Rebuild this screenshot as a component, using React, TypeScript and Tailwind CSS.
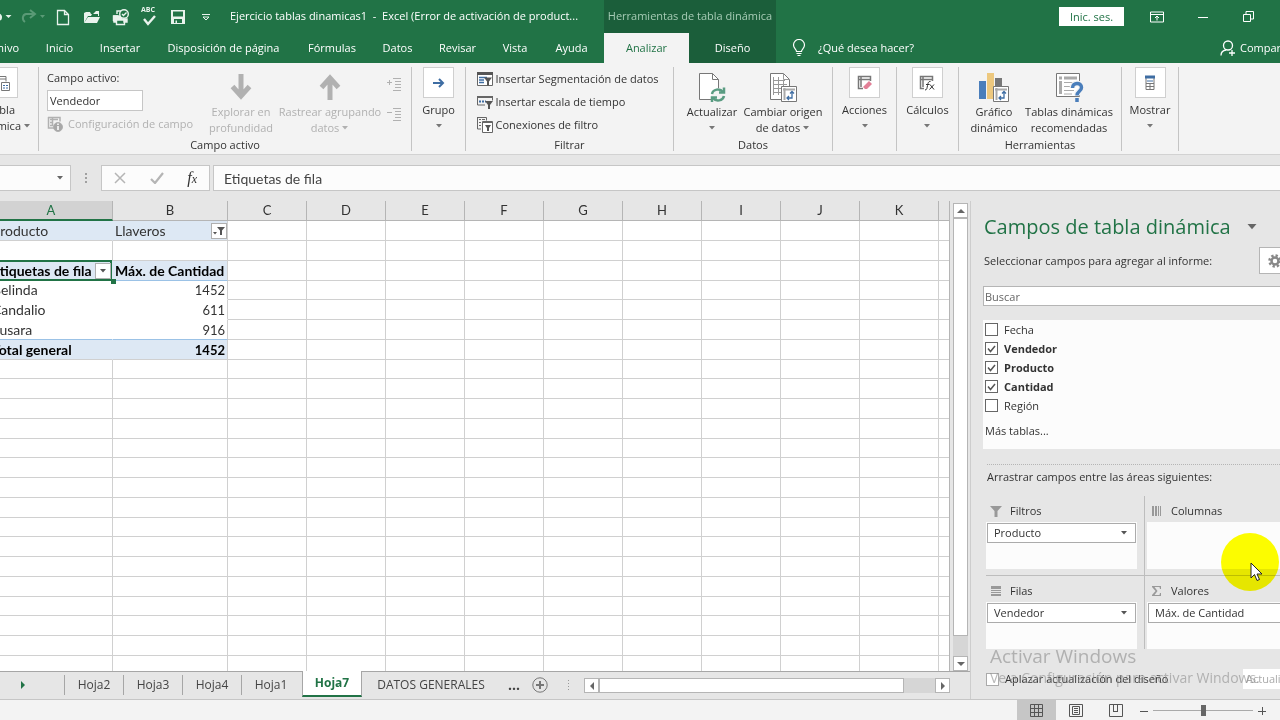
import type { ReactNode } from "react";
import clsx from "clsx";

const menuTabs = [
  { name: "Inicio", width: "w-[55px]" },
  { name: "Insertar", width: "w-[66px]" },
  { name: "Disposición de página", width: "w-[141px]" },
  { name: "Fórmulas", width: "w-[76px]" },
  { name: "Datos", width: "w-[55px]" },
  { name: "Revisar", width: "w-[65px]" },
  { name: "Vista", width: "w-[50px]" },
  { name: "Ayuda", width: "w-[63px]" },
];

const columns = ["C", "D", "E", "F", "G", "H", "I", "J", "K"];

const pivotRows = [
  { label: "Producto", value: "Llaveros", kind: "filter" },
  { label: "", value: "", kind: "empty" },
  { label: "Etiquetas de fila", value: "Máx. de Cantidad", kind: "head" },
  { label: "Belinda", value: "1452", kind: "data" },
  { label: "Candalio", value: "611", kind: "data" },
  { label: "Susara", value: "916", kind: "data" },
  { label: "Total general", value: "1452", kind: "total" },
];

const rowCount = 22;

const fields = [
  { name: "Fecha", checked: false },
  { name: "Vendedor", checked: true },
  { name: "Producto", checked: true },
  { name: "Cantidad", checked: true },
  { name: "Región", checked: false },
];

const sheets = ["Hoja2", "Hoja3", "Hoja4", "Hoja1"];

function Caret({ className }: { className?: string }) {
  return (
    <svg viewBox="0 0 8 4" className={clsx("inline-block h-1 w-2 shrink-0 fill-current", className)}>
      <path d="M1 0h6L4 3.5z" />
    </svg>
  );
}

/* ---------- Title bar ---------- */

function QuickAccess() {
  return (
    <div className="flex w-[216px] shrink-0 items-center text-[#e9f3ed]">
      <svg viewBox="0 0 50 20" className="h-5 w-[50px] shrink-0" fill="none" stroke="currentColor">
        <path d="M-3 7c4 0 5 3 3 6" strokeWidth="2" />
        <path d="M5.5 8h6l-3 3z" fill="currentColor" stroke="none" />
        <g stroke="#5a9a76">
          <path d="M34 7h-8c-4 1-4 6-1 8" strokeWidth="2" />
          <path d="M30 3l5 4-5 4" strokeWidth="2" />
          <path d="M40 8h5l-2.500 3z" fill="#5a9a76" stroke="none" />
        </g>
      </svg>
      <button aria-label="Nuevo" className="ml-1 w-[29px]">
        <svg viewBox="0 0 18 18" className="h-[18px] w-[18px]" fill="none" stroke="currentColor" strokeWidth="1.3">
          <path d="M3.500 2.500h7l4 4v10h-11zM10.500 2.500v4h4" />
        </svg>
      </button>
      <button aria-label="Abrir" className="w-[29px]">
        <svg viewBox="0 0 18 18" className="h-[18px] w-[18px]" fill="currentColor">
          <path d="M1 15V5l2-1h4l1 2h2l3-3h3v5h-1V6H9L8 8H5z" />
          <path d="M5 9h12l-3 6H1z" />
        </svg>
      </button>
      <button aria-label="Vista previa" className="w-[29px]">
        <svg viewBox="0 0 18 18" className="h-[18px] w-[18px]" fill="none" stroke="currentColor" strokeWidth="1.400">
          <path d="M1.500 13V8H6M1.500 13h3M5 6V3h4" />
          <path d="M2 8h5l3 3h5v3h-3v-2H4v2H2z" fill="currentColor" />
          <path d="M4.500 12v4.500h8V12" />
          <circle cx="12" cy="6" r="4.300" fill="#217346" />
          <path d="M10 6l1.500 1.500L14.500 4.500" />
        </svg>
      </button>
      <button aria-label="Ortografía" className="relative h-[18px] w-[28px] text-left">
        <span className="absolute -top-0.5 left-0 text-[7px] leading-2 font-bold">ABC</span>
        <svg viewBox="0 0 18 18" className="h-[18px] w-[18px]" fill="none" stroke="currentColor" strokeWidth="2.400">
          <path d="M3 11l4 5 7-8" />
        </svg>
      </button>
      <button aria-label="Guardar" className="w-[28px]">
        <svg viewBox="0 0 18 18" className="h-[18px] w-[18px]">
          <path d="M2 2h14v14H2z" fill="currentColor" />
          <path d="M4 3.500h10v5H4zM5 11h8v4H8v-2.500H6.500V15H5z" fill="#217346" />
        </svg>
      </button>
      <button aria-label="Personalizar" className="ml-1">
        <svg viewBox="0 0 10 10" className="h-[10px] w-[10px]" fill="none" stroke="currentColor">
          <path d="M1 2.500h8M2 5l3 3 3-3z" />
        </svg>
      </button>
    </div>
  );
}

function TitleBar() {
  return (
    <header className="flex h-[33px] shrink-0 items-center bg-[#217346] text-[11px] whitespace-nowrap text-white">
      <QuickAccess />
      <h1 className="ml-3.5 w-[374px] shrink-0">
        Ejercicio tablas dinamicas1&nbsp; -&nbsp; Excel (Error de activación de product...
      </h1>
      <div className="w-[172px] shrink-0 self-stretch bg-[#1b5e3a] text-center leading-[32px] text-[#a6cbb5]">
        Herramientas de tabla dinámica
      </div>
      <div className="flex flex-1 items-center justify-end">
        <button className="h-[19px] w-[65px] bg-white leading-4 text-[#217346]">Inic. ses.</button>
        <button aria-label="Opciones de presentación" className="ml-[26px]">
          <svg viewBox="0 0 14 12" className="h-3 w-[14px]" fill="none" stroke="currentColor">
            <path d="M.5 1h13v10H.5zM.5 3.500h13M7 9.500V5M5 7l2-2 2 2" />
          </svg>
        </button>
        <button aria-label="Minimizar" className="ml-[34px]">
          <svg viewBox="0 0 10 10" className="h-[10px] w-[10px]" stroke="currentColor">
            <path d="M0 5.500h10" />
          </svg>
        </button>
        <button aria-label="Restaurar" className="mr-[26px] ml-[35px]">
          <svg viewBox="0 0 11 11" className="h-[11px] w-[11px]" fill="none" stroke="currentColor">
            <path d="M.5 3.500h7v7h-7zM3 3V.5h7.500V8H8" />
          </svg>
        </button>
      </div>
    </header>
  );
}

function MenuTabs() {
  return (
    <nav className="flex h-[30px] shrink-0 items-center overflow-hidden bg-[#217346] text-[11px] font-medium text-white">
      <button className="flex w-8 shrink-0 justify-end pr-[13px]">Archivo</button>
      {menuTabs.map((tab) => (
        <button key={tab.name} className={clsx("shrink-0 text-center whitespace-nowrap", tab.width)}>
          {tab.name}
        </button>
      ))}
      <button className="ml-px w-[85px] shrink-0 self-stretch bg-[#f3f3f3] text-[#217346]">Analizar</button>
      <button className="w-[87px] shrink-0 self-stretch bg-[#1b5e3a]">Diseño</button>
      <button className="ml-4 flex items-center gap-3 whitespace-nowrap">
        <svg viewBox="0 0 14 18" className="h-[18px] w-[14px]" fill="none" stroke="currentColor" strokeWidth="1.200">
          <path d="M4.500 12.500c0-2-3-3-3-6.500a5.500 5.500 0 0 1 11 0c0 3.500-3 4.500-3 6.500zM4.500 14.500h5M5.500 16.500h3" />
        </svg>
        ¿Qué desea hacer?
      </button>
      <button className="ml-auto flex w-[60px] shrink-0 items-center gap-1 whitespace-nowrap">
        <svg viewBox="0 0 16 16" className="h-4 w-4 shrink-0" fill="none" stroke="currentColor" strokeWidth="1.300">
          <circle cx="8" cy="5.500" r="4.500" />
          <path d="M1 15.500c0-3 2-5 5-5.500M9 13h6M12 10v6" />
        </svg>
        Compartir
      </button>
    </nav>
  );
}

/* ---------- Ribbon ---------- */

function Group({ width, label, children }: { width: string; label?: string; children: ReactNode }) {
  return (
    <section className={clsx("flex h-[84px] shrink-0 flex-col border-r border-[#c4c4c4]", width)}>
      <div className="flex flex-1 justify-center">{children}</div>
      {label && <h2 className="h-3 text-center leading-3">{label}</h2>}
    </section>
  );
}

function BoxButton({ label, children }: { label: string; children: ReactNode }) {
  return (
    <button className="flex flex-col items-center whitespace-nowrap">
      <span className="mb-1 flex h-[31px] w-[31px] items-center justify-center border border-[#cfcfcf] bg-white">
        {children}
      </span>
      {label}
      <Caret className="mt-1.5 text-[#777]" />
    </button>
  );
}

function BigButton({
  lines,
  caret,
  width,
  muted,
  children,
}: {
  lines: string[];
  caret?: boolean;
  width: string;
  muted?: boolean;
  children: ReactNode;
}) {
  return (
    <button
      className={clsx("flex shrink-0 flex-col items-center whitespace-nowrap", width, muted && "text-[#b1b1b1]")}
    >
      <span className="mt-1 mb-px flex h-8 items-center">{children}</span>
      {lines.map((line, i) => (
        <span key={line} className="flex items-center gap-0.5">
          {line}
          {caret && i === 1 && <Caret className={muted ? "" : "text-[#777]"} />}
        </span>
      ))}
      {caret && lines.length === 1 && <Caret className="mt-1.5 text-[#777]" />}
    </button>
  );
}

function FilterRow({ label, children }: { label: string; children: ReactNode }) {
  return (
    <button className="flex h-[23px] items-center gap-[3px] whitespace-nowrap">
      <svg viewBox="0 0 16 16" className="h-4 w-4 shrink-0" fill="none" stroke="#666">
        {children}
      </svg>
      {label}
    </button>
  );
}

function Arrow({ up }: { up?: boolean }) {
  return (
    <svg
      viewBox="0 0 22 26"
      className={clsx("h-[26px] w-[22px]", up && "rotate-180")}
      fill="none"
      stroke="#b1b1b1"
      strokeWidth="5"
    >
      <path d="M11 0v22M2.500 12.500L11 22l8.500-9.500" />
    </svg>
  );
}

function IndentIcon({ plus }: { plus?: boolean }) {
  return (
    <svg viewBox="0 0 14 14" className="h-[14px] w-[14px]" fill="none" stroke="#b1b1b1">
      <path d="M6 1.500h8M8 4.500h6M8 7.500h6M8 10.500h6M6 13.500h8M0 5.500h5" />
      {plus && <path d="M2.500 3v5" />}
    </svg>
  );
}

function Ribbon() {
  return (
    <div className="flex h-[92px] shrink-0 overflow-hidden border-b border-[#d2d2d2] bg-[#f3f3f3] pt-1 text-[11px] leading-4 text-[#333]">
      <Group width="w-[39px]">
        <button className="flex w-full flex-col items-start overflow-hidden">
          <span className="mb-1 flex h-[31px] w-[18px] items-center border border-l-0 border-[#cfcfcf] bg-white">
            <svg viewBox="0 0 10 18" className="h-[18px] w-[10px]" fill="none" stroke="#777">
              <path d="M-2 2.500h8v5M-2 5h8" />
              <path d="M1.500 8.500h8v8h-8z" fill="#fff" />
              <path d="M3 11.500h2M6 11.500h2M3 14h2M6 14h2" stroke="#3e6da3" />
            </svg>
          </span>
          <span className="flex w-[15px] justify-end">Tabla</span>
          <span className="flex w-[31px] items-center justify-end gap-0.5 whitespace-nowrap">
            dinámica <Caret className="text-[#777]" />
          </span>
        </button>
      </Group>

      <Group width="w-[373px]" label="Campo activo">
        <div className="flex flex-1 pl-2">
          <div className="flex w-[160px] shrink-0 flex-col">
            <label htmlFor="campo" className="mt-[3px]">
              Campo activo:
            </label>
            <input
              id="campo"
              defaultValue="Vendedor"
              className="mt-1 h-[21px] w-24 border border-[#c6c6c6] bg-white px-0.5"
            />
            <button className="mt-[3px] flex items-center gap-[5px] leading-5 whitespace-nowrap text-[#b1b1b1]">
              <svg viewBox="0 0 16 16" className="h-4 w-4 shrink-0" fill="none" stroke="#b1b1b1">
                <path d="M1 1.500h12v4M1.500 1v11H7M3 3.500h8M3 6.500h3M3 9.500h3M5.500 1v9" strokeWidth="1.500" />
                <circle cx="11" cy="11" r="4.500" fill="#a8a8a8" />
                <path d="M11 7.500V9M11 10v4" stroke="#fff" strokeWidth="1.500" />
              </svg>
              Configuración de campo
            </button>
          </div>
          <BigButton lines={["Explorar en", "profundidad"]} width="w-[68px]" muted>
            <Arrow />
          </BigButton>
          <BigButton lines={["Rastrear agrupando", "datos"]} width="w-[110px]" caret muted>
            <Arrow up />
          </BigButton>
          <div className="ml-0.5 flex flex-col gap-4 pt-2.5">
            <IndentIcon plus />
            <IndentIcon />
          </div>
        </div>
      </Group>

      <Group width="w-[54px]">
        <BoxButton label="Grupo">
          <svg viewBox="0 0 12 12" className="h-3 w-3" fill="none" stroke="#3e6da3" strokeWidth="2">
            <path d="M0 6h10M6 2l4 4-4 4" />
          </svg>
        </BoxButton>
      </Group>

      <Group width="w-[208px]" label="Filtrar">
        <div className="flex w-[186px] flex-col">
          <FilterRow label="Insertar Segmentación de datos">
            <path d="M.5 1.500h15v13H.5z" fill="#fff" />
            <path d="M0 2.500h16" stroke="#555" strokeWidth="3" />
            <path d="M2 6.500h8M2 9h5M2 11.500h5" stroke="#3e6da3" strokeWidth="1.500" />
            <path d="M7 6.500h8l-3 4v4h-2v-4z" fill="#555" stroke="none" />
          </FilterRow>
          <FilterRow label="Insertar escala de tiempo">
            <path d="M.5 2.500h15v4M.5 2v9H8" />
            <path d="M0 3h16" strokeWidth="2" />
            <path d="M2 7.500h2M5 7.500h2M8 7.500h1" stroke="#3e6da3" strokeWidth="2" />
            <path d="M8 7h8l-3 4v4h-2v-4z" fill="#555" stroke="none" />
          </FilterRow>
          <FilterRow label="Conexiones de filtro">
            <path d="M.5 .5h9v3M.5 0v12H4M2 2.500h2M2 5.500h2M2 8.500h2M5 2.500h3" />
            <path d="M5.500 4.500h10v11h-10zM5 5.500h11" fill="#fff" />
            <path d="M8 8h6l-2 3v3h-2v-3z" fill="#555" stroke="none" />
          </FilterRow>
        </div>
      </Group>

      <Group width="w-[159px]" label="Datos">
        <BigButton lines={["Actualizar"]} width="w-[60px]" caret>
          <svg viewBox="0 0 28 30" className="h-[30px] w-7" fill="none" stroke="#777">
            <path d="M1.500 1.500h13l6 6v20h-19z" fill="#fff" />
            <path d="M14.500 1.500v6h6" />
            <circle cx="20" cy="23" r="7" fill="#f3f3f3" stroke="none" />
            <g stroke="#5a9c82" strokeWidth="2.500">
              <path d="M14 22c1-5 8-6 11-2M26 24c-1 5-8 6-11 2" />
              <path d="M26 15.500v5h-5M14 30v-4.500h5" />
            </g>
          </svg>
        </BigButton>
        <BigButton lines={["Cambiar origen", "de datos"]} width="w-[82px]" caret>
          <svg viewBox="0 0 28 30" className="h-[30px] w-7" fill="none" stroke="#777">
            <path d="M1.500 1.500h13l6 6v20h-19z" fill="#fff" />
            <path d="M14.500 1.500v6h6M4 8.500h12M4 12.500h14M4 16.500h10M4 20.500h8M4.500 5v18M9.500 5v18M14.500 9v6" stroke="#999" />
            <path d="M12.500 14.500h15v15h-15z" fill="#fff" />
            <path d="M14 17.500h12M15.500 16v12" stroke="#aaa" strokeWidth="2" />
            <path d="M18 26h5v-6M21 21.500l2-2 2 2M20 24l-2 2 2 2" stroke="#3e6da3" strokeWidth="1.300" />
          </svg>
        </BigButton>
      </Group>

      <Group width="w-[64px]">
        <BoxButton label="Acciones">
          <svg viewBox="0 0 16 16" className="h-4 w-4" fill="none" stroke="#777">
            <path d="M6 13.500H1.500v-12h12V6M4 1v11M1 4.500h12" strokeWidth="1.500" />
            <path d="M6 12l6-6 3 3-5 5H8z" fill="#e28097" stroke="none" />
          </svg>
        </BoxButton>
      </Group>

      <Group width="w-[62px]">
        <BoxButton label="Cálculos">
          <svg viewBox="0 0 16 16" className="h-4 w-4" fill="none" stroke="#777">
            <path d="M5 13.500H1.500v-12h12V6M4 1v11M1 4.500h12" strokeWidth="1.500" />
            <path d="M6 15c2 0 2-2 2.500-4.500S9.500 6 11.500 6.500M7 9.500h3.500M11 9.500l4 5M15 9.500l-4.500 5" stroke="#333" />
          </svg>
        </BoxButton>
      </Group>

      <Group width="w-[163px]" label="Herramientas">
        <BigButton lines={["Gráfico", "dinámico"]} width="w-[58px]">
          <svg viewBox="0 0 32 30" className="h-[30px] w-8" fill="none">
            <path d="M1 9h7v18H1z" fill="#4a7ebb" />
            <path d="M9 1h7v26H9z" fill="#edc87e" />
            <path d="M17 6h7v8h-7z" fill="#777" />
            <path d="M15.500 14.500h15v15h-15z" fill="#fff" stroke="#777" />
            <path d="M17 17.500h12M18.500 16v12" stroke="#aaa" strokeWidth="2" />
            <path d="M21 26h5v-6M24 21.500l2-2 2 2M23 24l-2 2 2 2" stroke="#3e6da3" strokeWidth="1.300" />
          </svg>
        </BigButton>
        <BigButton lines={["Tablas dinámicas", "recomendadas"]} width="w-[92px]">
          <svg viewBox="0 0 30 30" className="h-[30px] w-[30px]" fill="none">
            <path d="M2.500 1.500h23v23h-23z" fill="#fff" stroke="#777" />
            <path d="M5 6h3M10 6h13M6.500 9v13" stroke="#aaa" strokeWidth="3" />
            <path d="M10 10.500h13M10 14.500h12M10 18.500h10M10 22h8" stroke="#aaa" />
            <path
              d="M18.500 16c0-6 9-6 9-.5 0 4-4.500 3.500-4.500 8M23 26v4"
              stroke="#f3f3f3"
              strokeWidth="6"
            />
            <path
              d="M18.500 16c0-6 9-6 9-.5 0 4-4.500 3.500-4.500 8M23 26v4"
              stroke="#4a7ebb"
              strokeWidth="3.500"
            />
          </svg>
        </BigButton>
      </Group>

      <Group width="w-[57px]">
        <BoxButton label="Mostrar">
          <svg viewBox="0 0 10 16" className="h-4 w-[10px]" fill="none" stroke="#777">
            <path d="M1 1.500h8v13H1zM1 8.500h8M1 11.500h8M5 8v6" />
            <path d="M0 2h10" stroke="#3e6da3" strokeWidth="3" />
            <path d="M2 6h6" stroke="#3e6da3" />
          </svg>
        </BoxButton>
      </Group>
    </div>
  );
}

/* ---------- Formula bar and grid ---------- */

function FormulaBar() {
  return (
    <div className="flex h-[46px] shrink-0 items-start pt-[10px] text-[#666]">
      <div className="flex h-[26px] w-[71px] shrink-0 items-center border border-l-0 border-[#c6c6c6] bg-[#fcfcfc]">
        <input aria-label="Cuadro de nombres" className="w-0 flex-1" />
        <Caret className="mr-1.5" />
      </div>
      <span className="mx-3.5 grid h-[26px] w-0.5 content-center gap-0.5">
        <i className="h-0.5 bg-[#a0a0a0]" />
        <i className="h-0.5 bg-[#a0a0a0]" />
        <i className="h-0.5 bg-[#a0a0a0]" />
      </span>
      <div className="flex h-[26px] w-[109px] shrink-0 items-center justify-between border border-[#c6c6c6] bg-[#fcfcfc] px-3">
        <svg viewBox="0 0 12 12" className="h-3 w-3" stroke="#b5b5b5" strokeWidth="1.500">
          <path d="M1 1l10 10M11 1L1 11" />
        </svg>
        <svg viewBox="0 0 14 12" className="h-3 w-[14px]" fill="none" stroke="#b5b5b5" strokeWidth="2.200">
          <path d="M1 7l4 4 8-10" />
        </svg>
        <button className="font-['Liberation_Serif',serif] text-[16px] leading-5 text-[#333] italic">
          f<span className="text-[12px]">x</span>
        </button>
      </div>
      <input
        aria-label="Barra de fórmulas"
        defaultValue="Etiquetas de fila"
        className="ml-[3px] h-[26px] min-w-0 flex-1 border border-r-0 border-[#c6c6c6] bg-[#fcfcfc] px-[10px] font-['Lato',sans-serif] text-[14px] text-[#444]"
      />
    </div>
  );
}

function Grid() {
  return (
    <table className="w-full table-fixed border-separate border-spacing-0 font-['Lato',sans-serif] text-[14px] leading-4 text-[#333]">
      <colgroup>
        <col className="w-[113px]" />
        <col className="w-[115px]" />
        {columns.map((name) => (
          <col key={name} className="w-[79px]" />
        ))}
        <col />
      </colgroup>
      <thead className="text-[13px]">
        <tr className="h-5">
          <th className="border-r border-b-2 border-r-[#b5b5b5] border-b-[#217346] bg-[#d2d2d2] p-0 pr-2.5 font-normal text-[#217346]">
            A
          </th>
          {["B", ...columns].map((name) => (
            <th key={name} className="border-r border-b border-[#b5b5b5] bg-[#e6e6e6] p-0 pb-0.5 font-normal">
              {name}
            </th>
          ))}
          <th className="border-b border-[#b5b5b5] bg-[#e6e6e6]" />
        </tr>
      </thead>
      <tbody>
        {Array.from({ length: rowCount }, (_, i) => {
          const row = pivotRows[i];
          const kind = row?.kind;
          const blue = kind === "filter" || kind === "head" || kind === "total";
          const bold = kind === "head" || kind === "total";
          return (
            <tr key={i} className={i % 4 === 3 ? "h-[19px]" : "h-5"}>
              <td
                className={clsx(
                  "relative border-r border-b p-0 whitespace-nowrap",
                  blue ? "bg-[#dde8f4]" : "bg-white",
                  kind === "data" || blue ? "border-r-transparent" : "border-r-[#d0d0d0]",
                  kind === "head" || i === 5
                    ? "border-b-[#9bc2e6]"
                    : kind === "data"
                      ? "border-b-white"
                      : "border-b-[#d0d0d0]",
                  bold && "font-bold text-black",
                )}
              >
                {/* labels run out past the left edge of the window */}
                <span className="-ml-2 block">{row?.label}</span>
                {kind === "head" && (
                  <>
                    <span className="absolute -top-px right-0 -bottom-px -left-1 border-2 border-[#217346]" />
                    <span className="absolute -right-1 -bottom-1 z-10 h-[5px] w-[5px] bg-[#217346]" />
                    <button
                      aria-label="Filtrar etiquetas"
                      className="absolute top-0.5 right-px flex h-4 w-4 items-center justify-center border border-[#b0b0b0] bg-white text-[#555]"
                    >
                      <Caret />
                    </button>
                  </>
                )}
              </td>
              <td
                className={clsx(
                  "relative border-r border-b border-r-[#d0d0d0] px-0.5 py-0 whitespace-nowrap",
                  blue ? "bg-[#dde8f4]" : "bg-white",
                  kind === "head" || i === 5
                    ? "border-b-[#9bc2e6]"
                    : kind === "data"
                      ? "border-b-white"
                      : "border-b-[#d0d0d0]",
                  bold && "font-bold text-black",
                  (kind === "data" || kind === "total") && "text-right text-[13px]",
                )}
              >
                {row?.value}
                {kind === "filter" && (
                  <button
                    aria-label="Filtrar producto"
                    className="absolute top-0.5 right-0 flex h-4 w-4 items-center justify-center border border-[#b0b0b0] bg-white"
                  >
                    <svg viewBox="0 0 12 10" className="h-[10px] w-3" fill="#555">
                      <path d="M4 1h8L9 4.500V9H7V4.500zM0 6h4L2 8.500z" />
                    </svg>
                  </button>
                )}
              </td>
              {columns.map((name) => (
                <td key={name} className="border-r border-b border-[#d0d0d0] bg-white p-0" />
              ))}
              <td className="border-b border-[#d0d0d0] bg-white p-0" />
            </tr>
          );
        })}
        <tr className="h-[15px]">
          {["A", "B", ...columns].map((name) => (
            <td key={name} className="border-r border-[#d0d0d0] bg-white p-0" />
          ))}
          <td className="bg-white p-0" />
        </tr>
      </tbody>
    </table>
  );
}

function ScrollButton({ label, path }: { label: string; path: string }) {
  return (
    <button
      aria-label={label}
      className="flex h-[15px] w-[15px] shrink-0 items-center justify-center border border-[#b5b5b5] bg-white"
    >
      <svg viewBox="0 0 8 8" className="h-2 w-2" fill="#666">
        <path d={path} />
      </svg>
    </button>
  );
}

function SheetTabs() {
  return (
    <div className="flex h-7 shrink-0 items-start border-t border-[#a6a6a6] pr-5 text-[12px] text-[#444]">
      <button aria-label="Siguiente hoja" className="ml-5 flex h-[26px] w-[44px] shrink-0 items-center">
        <svg viewBox="0 0 8 8" className="h-2 w-2" fill="#217346">
          <path d="M1 0l4 4-4 4z" />
        </svg>
      </button>
      {sheets.map((name) => (
        <button key={name} className="mt-[3px] h-5 w-[59px] shrink-0 border-l border-[#a6a6a6] leading-5">
          {name}
        </button>
      ))}
      <button className="-mt-px ml-0.5 h-[26px] w-[60px] shrink-0 border-x border-b-2 border-x-[#a6a6a6] border-b-[#217346] bg-white font-bold text-[#217346]">
        Hoja7
      </button>
      <button className="h-[26px] w-[138px] shrink-0 whitespace-nowrap">DATOS GENERALES</button>
      <span className="ml-2 w-5 shrink-0 text-[14px] leading-[26px] font-bold">...</span>
      <button aria-label="Hoja nueva" className="mt-[5px] ml-1">
        <svg viewBox="0 0 16 16" className="h-4 w-4" fill="none" stroke="#777">
          <circle cx="8" cy="8" r="7.200" />
          <path d="M8 4v8M4 8h8" strokeWidth="2" />
        </svg>
      </button>
      <span className="mt-2 ml-5 grid w-px shrink-0 gap-0.5">
        <i className="h-px bg-[#999]" />
        <i className="h-px bg-[#999]" />
        <i className="h-px bg-[#999]" />
        <i className="h-px bg-[#999]" />
      </span>
      <div className="mt-1.5 ml-[15px] flex min-w-0 flex-1 bg-[#d6d6d6]">
        <ScrollButton label="Izquierda" path="M6 0v8L2 4z" />
        <div className="mr-[31px] h-[15px] flex-1 border border-[#b5b5b5] bg-white" />
        <ScrollButton label="Derecha" path="M2 0v8l4-4z" />
      </div>
    </div>
  );
}

/* ---------- Field list ---------- */

function CheckBox({ name, checked }: { name: string; checked: boolean }) {
  return (
    <label className={clsx("flex h-[19px] items-center gap-1.5", checked && "font-bold")}>
      <span className="relative h-[13px] w-[13px]">
        <input
          type="checkbox"
          defaultChecked={checked}
          className="peer block h-[13px] w-[13px] appearance-none border border-[#666] bg-white"
        />
        <svg
          viewBox="0 0 13 13"
          className="pointer-events-none absolute inset-0 hidden peer-checked:block"
          fill="none"
          stroke="#555"
          strokeWidth="1.500"
        >
          <path d="M3 6.500l2.500 3L10 4" />
        </svg>
      </span>
      {name}
    </label>
  );
}

function Area({ title, field, icon }: { title: string; field?: string; icon: ReactNode }) {
  return (
    <div className="pt-[7px]">
      <h3 className="flex h-4 items-center gap-2 pl-1">
        <svg viewBox="0 0 12 12" className="h-3 w-3 shrink-0" fill="#999">
          {icon}
        </svg>
        {title}
      </h3>
      <div className="mt-[3px] h-[47px] bg-[#fcfcfc] p-px">
        {field && (
          <button className="flex h-5 w-full items-center justify-between border border-[#ababab] bg-white px-1.5 whitespace-nowrap">
            {field}
            <Caret className="mr-px text-[#555]" />
          </button>
        )}
      </div>
    </div>
  );
}

function FieldPane() {
  return (
    <aside className="relative flex w-[310px] shrink-0 flex-col overflow-hidden border-l border-[#cdcdcd] pl-3 text-[11px] leading-4 text-[#333]">
      <div className="mt-3 flex h-7 shrink-0 items-center">
        <h2 className="w-[263px] shrink-0 pl-px text-[20px] whitespace-nowrap text-[#217346]">
          Campos de tabla dinámica
        </h2>
        <Caret className="h-1.5 w-3 text-[#666]" />
      </div>
      <div className="mt-1.5 flex h-[27px] shrink-0 items-center justify-between">
        <p className="pl-px whitespace-nowrap">Seleccionar campos para agregar al informe:</p>
        <button
          aria-label="Herramientas"
          className="flex h-[27px] w-[21px] shrink-0 items-center overflow-hidden border border-r-0 border-[#b5b5b5] bg-white pl-2"
        >
          <svg viewBox="0 0 14 14" className="h-[14px] w-[14px] shrink-0" fill="none" stroke="#888">
            <circle cx="7" cy="7" r="3.500" strokeWidth="2.500" />
            <circle cx="7" cy="7" r="5.500" strokeWidth="2.500" strokeDasharray="2.300 2" />
          </svg>
        </button>
      </div>
      <input
        aria-label="Buscar"
        placeholder="Buscar"
        className="mt-3 h-5 w-full shrink-0 border border-r-0 border-[#b5b5b5] bg-white px-px placeholder:text-[#666]"
      />
      <div className="mt-[14px] h-[129px] shrink-0 bg-[#fcfcfc] pl-0.5">
        {fields.map((field) => (
          <CheckBox key={field.name} name={field.name} checked={field.checked} />
        ))}
        <a href="#" className="mt-2 block">
          Más tablas...
        </a>
      </div>
      <div className="mt-[15px] ml-1 shrink-0 border-t border-dotted border-[#b5b5b5] pt-1 whitespace-nowrap">
        Arrastrar campos entre las áreas siguientes:
      </div>
      {/* the right-hand areas run out past the window */}
      <div className="mt-3 ml-[3px] grid shrink-0 grid-cols-[159px_160px]">
        <div className="-mt-px border-r border-b border-[#bdbdbd] pr-[7px] pb-1.5">
          <Area title="Filtros" field="Producto" icon={<path d="M0 1h12L7.500 6v6h-3V6z" />} />
        </div>
        <div className="-mt-px border-b border-[#bdbdbd] pb-1.5 pl-0.5">
          <Area title="Columnas" icon={<path d="M1 1h2v10H1zM4 1h2v10H4zM7 1h1v10H7zM9 1h1v10H9z" />} />
        </div>
        <div className="border-r border-[#bdbdbd] pr-[7px]">
          <Area title="Filas" field="Vendedor" icon={<path d="M1 1h10v3H1zM1 5h10v1H1zM1 7h10v1H1zM1 9h10v2H1z" />} />
        </div>
        <div className="pl-0.5">
          <Area
            title="Valores"
            field="Máx. de Cantidad"
            icon={<path d="M1 1h9v3H9L8.500 2H3.500l3 4-3 4h5L9 8h1v3H1v-1l3.500-4L1 2z" />}
          />
        </div>
      </div>
      <div className="mt-5 ml-[3px] flex h-5 shrink-0 items-center justify-between whitespace-nowrap">
        <label className="flex items-center gap-1.5">
          <input type="checkbox" className="h-[13px] w-[13px] appearance-none border border-[#aaa] bg-white" />
          Aplazar actualización del diseño
        </label>
        <button className="h-5 w-[37px] overflow-hidden bg-white pl-[3px] text-left text-[#aaa]">Actualizar</button>
      </div>

      {/* Windows activation watermark */}
      <div className="pointer-events-none absolute top-[441px] left-[19px] whitespace-nowrap text-[#8c8c8c]/60">
        <p className="text-[19px] leading-7">Activar Windows</p>
        <p className="text-[14px] leading-4">Ve a Configuración para activar Windows.</p>
      </div>

      {/* Mouse pointer with its highlight */}
      <div className="pointer-events-none absolute top-[332px] left-[250px] h-[58px] w-[58px] rounded-full bg-[#ffff00] mix-blend-multiply" />
      <svg viewBox="0 0 13 20" className="pointer-events-none absolute top-[361px] left-[279px] h-5 w-[13px]">
        <path d="M1 1v15l3.500-3.500L7 18.500l2.500-1L7 12h5z" fill="#fff" stroke="#222" />
      </svg>
    </aside>
  );
}

/* ---------- Status bar ---------- */

function StatusBar() {
  return (
    <footer className="flex h-[22px] shrink-0 items-center justify-end border-t border-[#c6c6c6] bg-[#f3f3f3] text-[#555]">
      <button aria-label="Normal" className="flex h-full w-[39px] items-center justify-center bg-[#c6c6c6]">
        <svg viewBox="0 0 14 14" className="h-[14px] w-[14px]" fill="none" stroke="currentColor">
          <path d="M.5 .5h12v12H.5zM4.500 0v13M8.500 0v13M0 4.500h13M0 8.500h13" />
        </svg>
      </button>
      <button aria-label="Diseño de página" className="flex h-full w-10 items-center justify-center">
        <svg viewBox="0 0 14 14" className="h-[14px] w-[14px]" fill="none" stroke="currentColor">
          <path d="M.5 .5h13v12H.5zM3.500 2.500h7v8h-7zM5 4.500h4M5 6.500h4M5 8.500h4" />
        </svg>
      </button>
      <button aria-label="Salto de página" className="flex h-full w-10 items-center justify-center">
        <svg viewBox="0 0 14 14" className="h-[14px] w-[14px]" fill="none" stroke="currentColor">
          <path d="M.5 .5h13v12H.5zM4.500 0v7.500M8.500 0v7.500M4 7.500h5" />
        </svg>
      </button>
      <button aria-label="Alejar" className="ml-1 flex h-full items-center">
        <svg viewBox="0 0 8 8" className="h-2 w-2" stroke="currentColor">
          <path d="M0 4.500h8" />
        </svg>
      </button>
      <input
        type="range"
        aria-label="Zoom"
        defaultValue={50}
        className="mx-[5px] h-4 w-[100px] appearance-none bg-transparent [&::-webkit-slider-runnable-track]:h-px [&::-webkit-slider-runnable-track]:bg-[#aaa] [&::-webkit-slider-thumb]:-mt-[5px] [&::-webkit-slider-thumb]:h-[11px] [&::-webkit-slider-thumb]:w-[5px] [&::-webkit-slider-thumb]:appearance-none [&::-webkit-slider-thumb]:bg-[#666]"
      />
      <button aria-label="Acercar" className="mr-3.5 flex h-full items-center">
        <svg viewBox="0 0 8 8" className="h-2 w-2" stroke="currentColor">
          <path d="M0 4.500h8M4.500 0v8" />
        </svg>
      </button>
    </footer>
  );
}

export default function App() {
  return (
    <div className="flex min-h-screen flex-col overflow-hidden bg-[#e6e6e6] font-['Open_Sans',sans-serif]">
      <TitleBar />
      <MenuTabs />
      <Ribbon />
      <FormulaBar />
      <div className="flex flex-1">
        <main className="flex min-w-0 flex-1 flex-col">
          <div className="flex flex-1">
            <div className="min-w-0 flex-1 overflow-hidden border-r border-[#b5b5b5]">
              <Grid />
            </div>
            <div className="mt-0.5 mr-0.5 ml-[3px] flex w-[15px] flex-col bg-[#d6d6d6]">
              <ScrollButton label="Arriba" path="M0 6h8L4 2z" />
              <div className="mb-5 flex-1 border border-[#b5b5b5] bg-white" />
              <ScrollButton label="Abajo" path="M0 2h8L4 6z" />
            </div>
          </div>
          <SheetTabs />
        </main>
        <FieldPane />
      </div>
      <StatusBar />
    </div>
  );
}
